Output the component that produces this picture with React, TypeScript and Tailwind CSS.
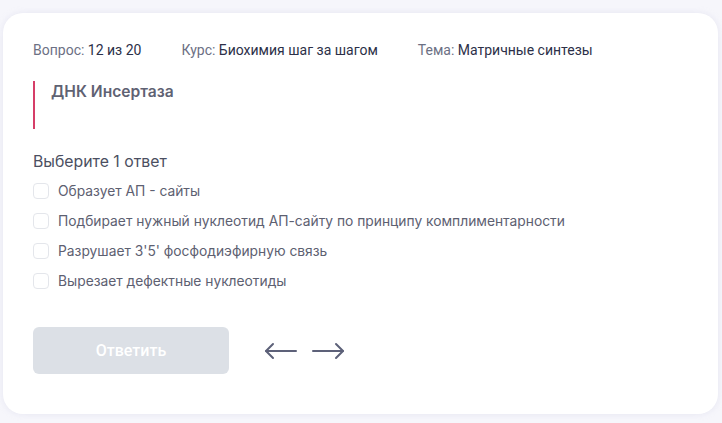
import React, { useState } from 'react';

const options = [
    'Образует АП - сайты',
    'Подбирает нужный нуклеотид АП-сайту по принципу комплиментарности',
    "Разрушает 3'5' фосфодиэфирную связь",
    'Вырезает дефектные нуклеотиды',
];

function Arrow({ dir }: { dir: 'left' | 'right' }) {
    return (
        <svg width="34" height="20" viewBox="0 0 34 20" fill="none" stroke="#5d6179" strokeWidth="2" strokeLinecap="round" strokeLinejoin="round">
            {dir === 'left' ? (
                <>
                    <path d="M2 10h30" />
                    <path d="M9 3l-7 7 7 7" />
                </>
            ) : (
                <>
                    <path d="M2 10h30" />
                    <path d="M25 3l7 7-7 7" />
                </>
            )}
        </svg>
    );
}

export default function App() {
    const [selected, setSelected] = useState<number | null>(null);

    return (
        <div className="w-[722px] h-[423px] bg-[#f6f6fb] pt-[13px] pl-[3px] pr-[4px] font-['Inter','Roboto',sans-serif]">
            <div className="bg-white rounded-[20px] h-[401px] shadow-[0_0_6px_rgba(200,200,225,0.35)] pl-[30px] pt-[29px]">
                {/* Meta line */}
                <div className="flex items-center gap-[40px] text-[14px] leading-[16px] font-['Roboto',sans-serif]">
                    <span className="text-[#6c7084]">Вопрос: <span className="text-[#2c3048]">12 из 20</span></span>
                    <span className="text-[#6c7084]">Курс: <span className="text-[#2c3048]">Биохимия шаг за шагом</span></span>
                    <span className="text-[#6c7084]">Тема: <span className="text-[#2c3048]">Матричные синтезы</span></span>
                </div>

                {/* Question */}
                <div className="mt-[23px] h-[48px] border-l-2 border-[#d63e68] pl-[16px] pt-[1px]">
                    <p className="text-[15.6px] leading-[20px] font-semibold text-[#5f6273]">ДНК Инсертаза</p>
                </div>

                <p className="mt-[23px] text-[15.8px] leading-[20px] text-[#4b4f61]">Выберите 1 ответ</p>

                <div className="mt-[4px] flex flex-col">
                    {options.map((opt, i) => (
                        <label key={i} className="flex items-center h-[30px] gap-[9px] cursor-pointer" onClick={() => setSelected(i)}>
                            <span className={`w-[16px] h-[16px] rounded-[4px] border ${selected === i ? 'border-[#d63e68] bg-[#d63e68]' : 'border-[#e4e6eb] bg-white'}`}></span>
                            <span className="text-[13.8px] leading-[18px] text-[#5d6071]">{opt}</span>
                        </label>
                    ))}
                </div>

                <div className="mt-[31px] flex items-center">
                    <button className="w-[196px] h-[47px] rounded-[6px] bg-[#dce0e6] text-white text-[16px] font-medium font-['Roboto',sans-serif]">
                        Ответить
                    </button>
                    <div className="ml-[35px] flex items-center gap-[13px]">
                        <Arrow dir="left" />
                        <Arrow dir="right" />
                    </div>
                </div>
            </div>
        </div>
    );
}
